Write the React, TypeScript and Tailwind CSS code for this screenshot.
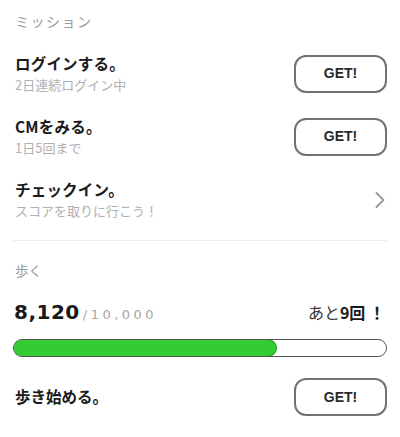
const jp = { fontFamily: '"Noto Sans CJK JP", "Noto Sans", sans-serif' }

function GetButton() {
  return (
    <button
      className="w-[93px] h-[38px] rounded-[12px] border-2 border-[#727272] bg-white text-[14px] font-bold text-[#2a2a2a]"
      style={{ fontFamily: '"Liberation Sans", Arial, sans-serif' }}
    >
      GET!
    </button>
  )
}

function MissionRow({ title, sub, action }: { title: string; sub: string; action: React.ReactNode }) {
  return (
    <div className="h-[63px] flex items-center justify-between">
      <div className="flex flex-col pl-[2px]">
        <span className="text-[15.5px] leading-[20px] font-bold text-[#1a1a1a] tracking-[0.2px]">{title}</span>
        <span className="text-[13px] leading-[18px] mt-[3px] text-[#b0b0b0]">{sub}</span>
      </div>
      {action}
    </div>
  )
}

export default function App() {
  return (
    <div className="w-[400px] h-[437px] bg-white px-[13px] overflow-hidden" style={jp}>
      <div className="h-[42px] flex items-center pl-[2px] text-[14px] text-[#9a9a9a] tracking-[1.5px]">
        ミッション
      </div>

      <MissionRow title="ログインする。" sub="2日連続ログイン中" action={<GetButton />} />
      <MissionRow title="CMをみる。" sub="1日5回まで" action={<GetButton />} />
      <MissionRow
        title="チェックイン。"
        sub="スコアを取りに行こう！"
        action={
          <svg width="10" height="16" viewBox="0 0 10 16" className="mr-[2px]">
            <path d="M1.5 1 L8.5 8 L1.5 15" fill="none" stroke="#9a9a9a" strokeWidth="1.8" strokeLinecap="round" strokeLinejoin="round" />
          </svg>
        }
      />

      <div className="mt-[9px] h-px bg-[#ececec]" />

      <div className="h-[58px] flex items-center pl-[2px] text-[13.5px] text-[#9a9a9a]">歩く</div>

      <div className="h-[26px] flex items-center justify-between">
        <div className="flex items-baseline pl-[1px]">
          <span
            className="text-[20px] font-bold text-[#1a1a1a] tracking-[0.5px]"
            style={{ fontFamily: '"DejaVu Sans", sans-serif' }}
          >
            8,120
          </span>
          <span
            className="ml-[3px] text-[13px] text-[#a5a5a5] tracking-[3.5px]"
            style={{ fontFamily: '"DejaVu Sans", sans-serif' }}
          >
            /10,000
          </span>
        </div>
        <div className="text-[16px] text-[#333] pr-[2px]">
          あと<span className="font-bold text-[#1a1a1a]">9回 ！</span>
        </div>
      </div>

      <div className="mt-[14px] h-[18px] rounded-full border-[1.5px] border-[#555] bg-white overflow-hidden">
        <div className="h-full w-[70.5%] rounded-full bg-[#33cc33] border-[1.5px] border-[#1f8f1f] -ml-px -mt-px box-content" />
      </div>

      <div className="mt-[21px] h-[38px] flex items-center justify-between">
        <span className="pl-[2px] text-[15.5px] font-bold text-[#1a1a1a]">歩き始める。</span>
        <GetButton />
      </div>
    </div>
  )
}
